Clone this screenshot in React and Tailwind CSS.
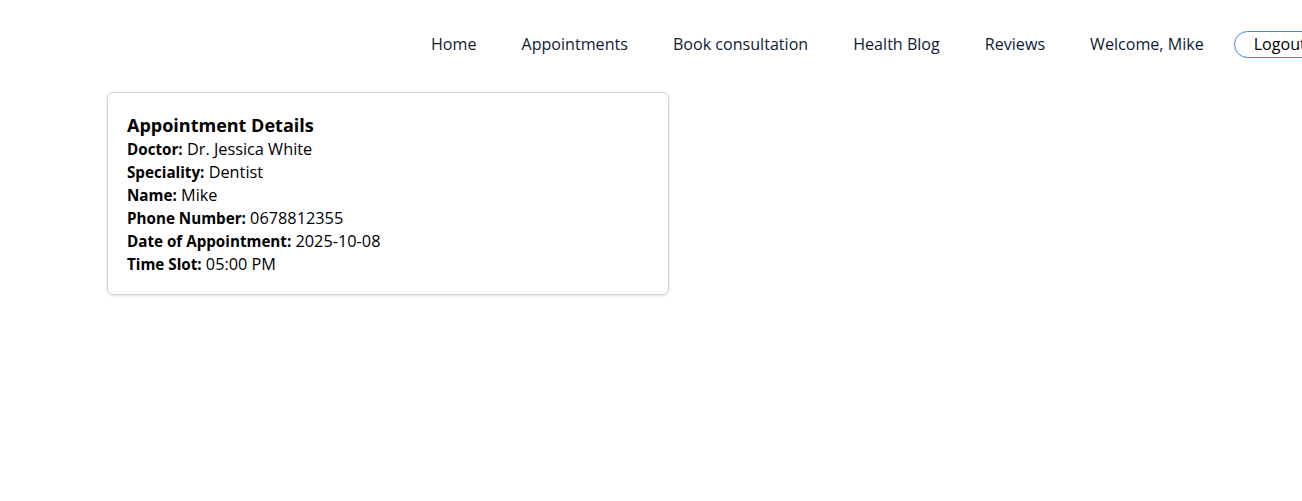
import React from 'react';

const navLinks = ['Home', 'Appointments', 'Book consultation', 'Health Blog', 'Reviews'];

const details = [
    ['Doctor:', 'Dr. Jessica White'],
    ['Speciality:', 'Dentist'],
    ['Name:', 'Mike'],
    ['Phone Number:', '0678812355'],
    ['Date of Appointment:', '2025-10-08'],
    ['Time Slot:', '05:00 PM'],
];

const App = () => {
    return (
        <div className="min-h-[501px] bg-white overflow-hidden font-['Open_Sans',sans-serif]">
            {/* top navigation, runs past the right edge */}
            <nav className="flex items-center pl-[431px] pt-[31px] h-[58px] whitespace-nowrap text-[16.1px] text-[#0d1b33]">
                <ul className="flex items-center gap-[45px]">
                    {navLinks.map(link => (
                        <li key={link}><a href="#" className="leading-[27px]">{link}</a></li>
                    ))}
                    <li className="leading-[27px]">Welcome, Mike</li>
                </ul>
                <button className="shrink-0 ml-[30px] h-[27px] pl-[19px] pr-[18px] border border-[#3b82f6] rounded-full text-black leading-[25px]">
                    Logout
                </button>
            </nav>

            <div className="pl-[107px] pt-[34px]">
                <div className="w-[562px] border border-[#d1d1d1] rounded-[6px] shadow-[0_1px_3px_rgba(0,0,0,0.12)] px-[19px] pt-[19px] pb-[18px] text-black">
                    <h2 className="text-[18px] font-bold leading-[26px]">Appointment Details</h2>
                    {details.map(([label, value]) => (
                        <p key={label} className="text-[16.3px] leading-[23px]">
                            <span className="font-bold text-[15.2px]">{label}</span> {value}
                        </p>
                    ))}
                </div>
            </div>
        </div>
    );
};

export default App;
